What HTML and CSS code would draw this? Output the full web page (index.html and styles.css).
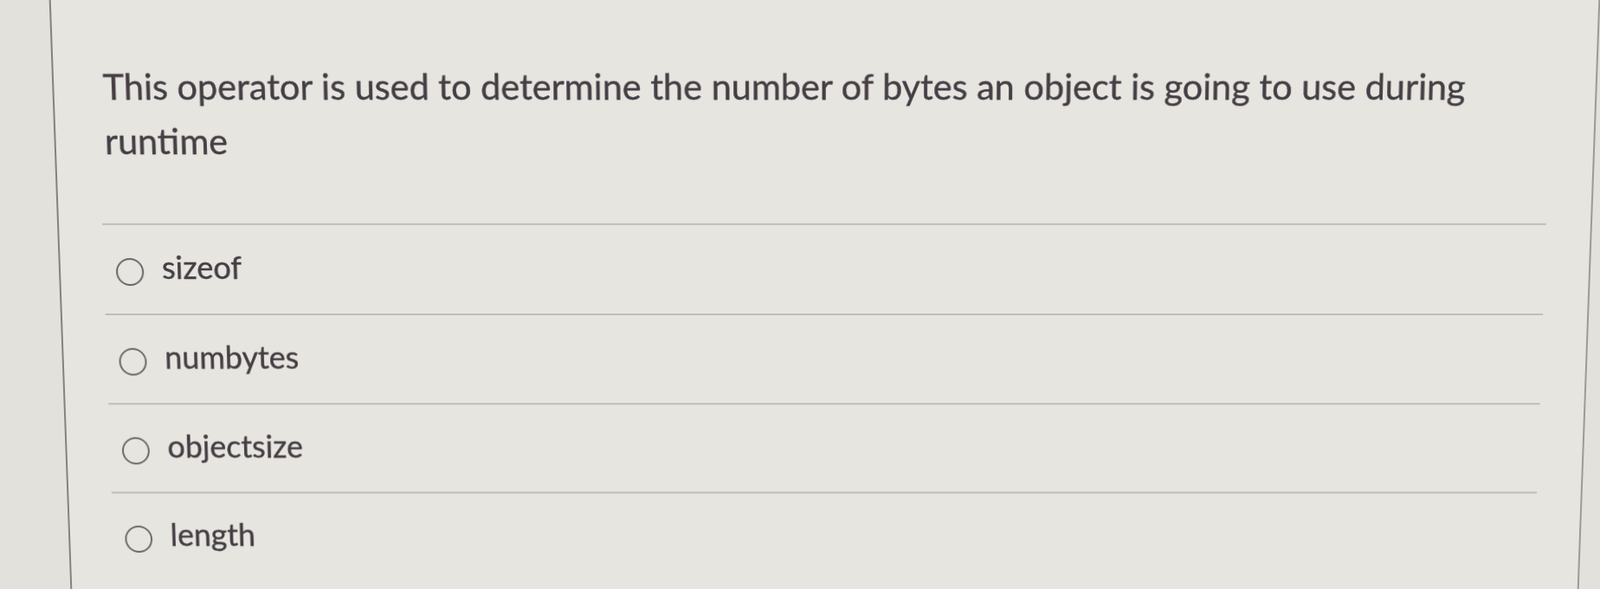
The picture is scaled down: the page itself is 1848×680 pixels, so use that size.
FILE: index.html
```html
<!DOCTYPE html>
<html lang="en">
<head>
<meta charset="utf-8">
<title>Question</title>
<link rel="stylesheet" href="styles.css">
</head>
<body>
<div class="page">
  <div class="gutter"></div>
  <div class="card">
    <div class="question">This operator is used to determine the number of bytes an object is going to use during runtime</div>
    <ul class="answers">
      <li class="answer"><span class="radio"></span><span class="label">sizeof</span></li>
      <li class="answer"><span class="radio"></span><span class="label">numbytes</span></li>
      <li class="answer"><span class="radio"></span><span class="label">objectsize</span></li>
      <li class="answer"><span class="radio"></span><span class="label">length</span></li>
    </ul>
  </div>
  <div class="gutter-right"></div>
</div>
</body>
</html>
```
FILE: styles.css
```css
html, body {
  margin: 0;
  padding: 0;
  height: 100%;
  overflow: hidden;
}
body {
  background: #e3e1dc;
  font-family: Lato, "Open Sans", sans-serif;
  color: #453e44;
}
.page {
  display: flex;
  height: 700px;
  margin-top: -10px;
  padding-top: 10px;
  box-sizing: border-box;
  background: #e3e1dc;
  transform-origin: 952px 350px;
  transform: perspective(1000px) rotateX(-2.35deg);
}
.gutter {
  width: 69px;
  flex: none;
}
.gutter-right {
  width: 12px;
  flex: none;
}
.card {
  flex: 1;
  background: #e7e5e0;
  border-left: 2px solid #858180;
  border-right: 2px solid #9d9997;
  display: flex;
  flex-direction: column;
}
.question {
  font-size: 41px;
  line-height: 62px;
  padding: 71px 110px 0 56px;
  -webkit-text-stroke: 0.4px currentColor;
}
.answers {
  list-style: none;
  margin: 63px 51px 0 50px;
  padding: 0;
}
.answer {
  border-top: 2px solid #c0bcb8;
  height: 104px;
  display: flex;
  align-items: center;
  padding-left: 14px;
  padding-top: 6px;
  box-sizing: border-box;
}
.radio {
  width: 32px;
  height: 32px;
  box-sizing: border-box;
  border: 2.5px solid #6a6568;
  border-radius: 50%;
  flex: none;
}
.label {
  font-size: 36px;
  line-height: 44px;
  margin-left: 21px;
  margin-bottom: 12px;
  -webkit-text-stroke: 0.4px currentColor;
}
```
